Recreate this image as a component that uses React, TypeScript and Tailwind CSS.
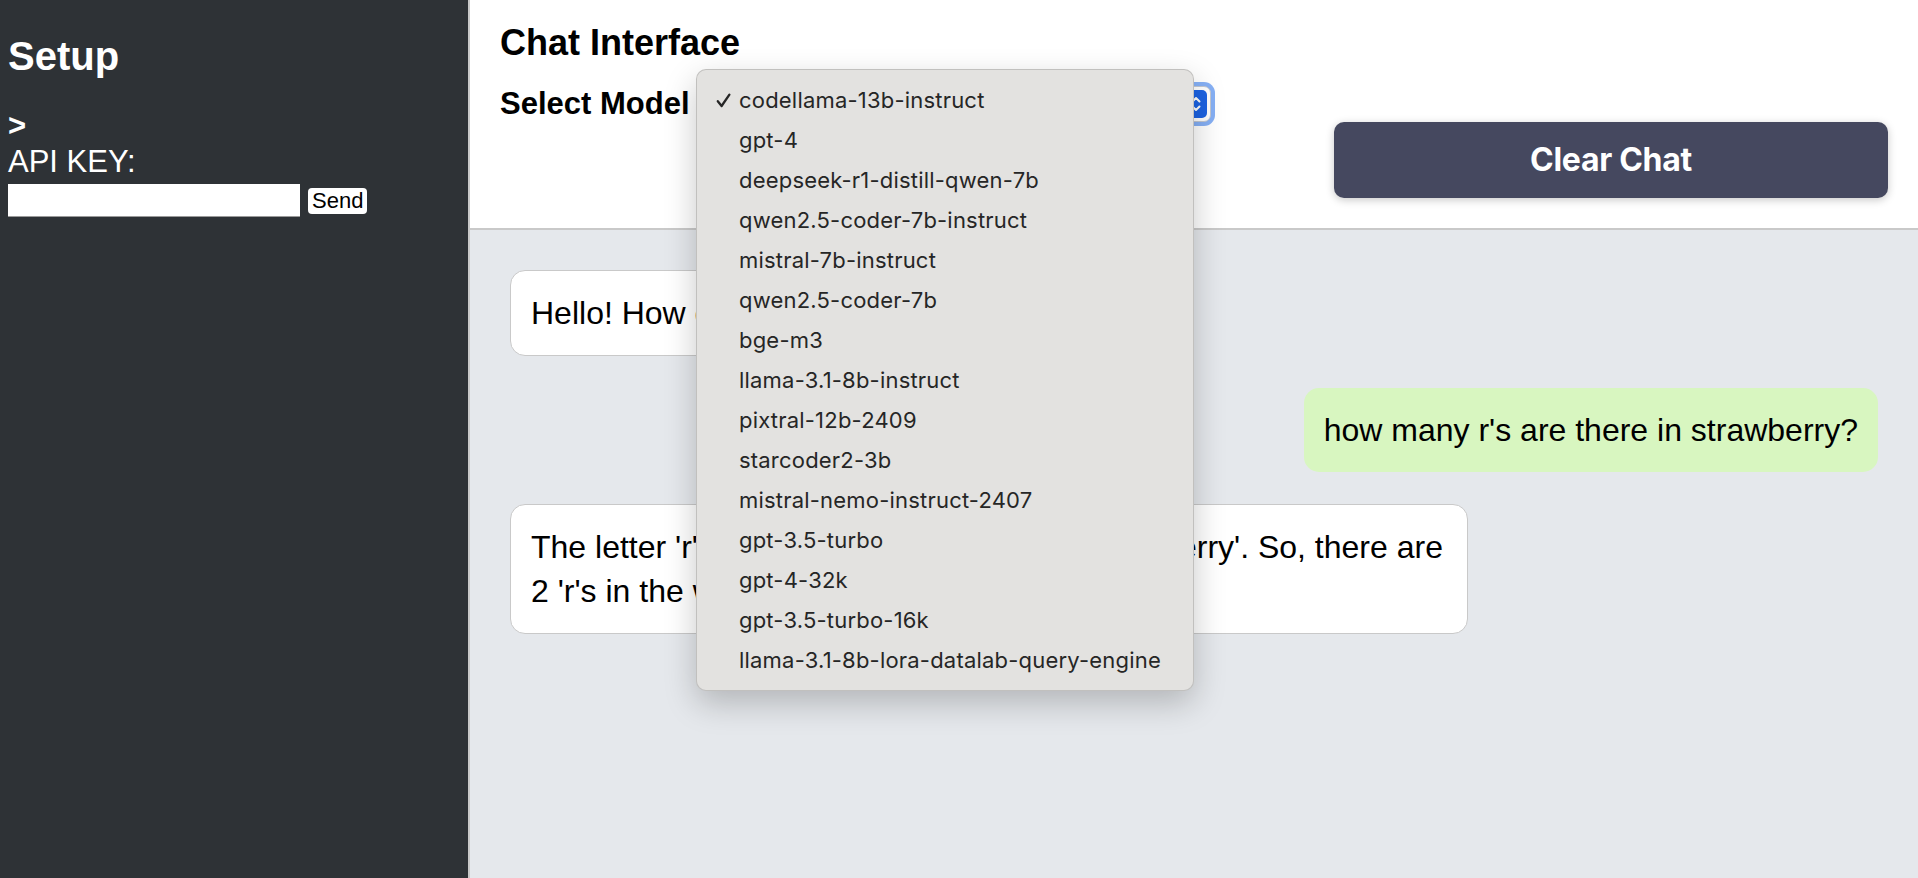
import React from 'react';

const models = [
  'codellama-13b-instruct',
  'gpt-4',
  'deepseek-r1-distill-qwen-7b',
  'qwen2.5-coder-7b-instruct',
  'mistral-7b-instruct',
  'qwen2.5-coder-7b',
  'bge-m3',
  'llama-3.1-8b-instruct',
  'pixtral-12b-2409',
  'starcoder2-3b',
  'mistral-nemo-instruct-2407',
  'gpt-3.5-turbo',
  'gpt-4-32k',
  'gpt-3.5-turbo-16k',
  'llama-3.1-8b-lora-datalab-query-engine',
];

const messages = [
  { role: 'assistant', text: 'Hello! How can I help you today?' },
  { role: 'user', text: "how many r's are there in strawberry?" },
  {
    role: 'assistant',
    text: "The letter 'r' appears twice in the word 'strawberry'. So, there are 2 'r's in the word.",
  },
];

const App: React.FC = () => {
  const selected = models[0];

  return (
    <div className="flex h-screen w-full overflow-hidden font-['Liberation_Sans',Arial,sans-serif] text-black">
      {/* Sidebar */}
      <aside className="w-[470px] shrink-0 bg-[#2e3236] border-r-2 border-[#c9c9c9] pl-2 text-white">
        <h1 className="mt-[33px] text-[40px] font-bold leading-[46px]">Setup</h1>
        <div className="mt-[29px] text-[31px] font-bold leading-[36px]">&gt;</div>
        <label className="block text-[31px] leading-[36px]">API KEY:</label>
        <div className="mt-[4px] flex items-center gap-2">
          <input
            type="password"
            className="w-[292px] h-[33px] bg-white border-b border-[#9a9a9a] text-black outline-none"
          />
          <button className="h-[26px] px-[4px] rounded-[4px] bg-white text-black text-[22px] leading-[26px]">
            Send
          </button>
        </div>
      </aside>

      {/* Main */}
      <main className="relative flex-1 min-w-0 flex flex-col">
        <header className="bg-white border-b-2 border-[#c9c9c9] px-[30px] pt-[22px] pb-[30px] flex flex-col">
          <h2 className="text-[36px] font-bold leading-[41px]">Chat Interface</h2>
          <div className="mt-[23px] h-[36px] flex items-center">
            <label className="text-[31px] font-bold leading-[36px]">Select Model</label>
            <div className="ml-[22px] w-[499px] h-[36px] rounded-[7px] bg-white border border-[#c3c8d2] shadow-[0_0_0_4px_#86b0f5] flex items-center justify-between pl-[26px] pr-[3px]">
              <span className="font-['Inter',sans-serif] text-[22px] text-[#222]">{selected}</span>
              <span className="w-[22px] h-[28px] rounded-[5px] bg-[#1c63e3] flex items-center justify-center">
                <svg width="12" height="18" viewBox="0 0 12 18" fill="none" stroke="white" strokeWidth="2" strokeLinecap="round" strokeLinejoin="round">
                  <path d="M2.5 6.5 L6 3 L9.5 6.5" />
                  <path d="M2.5 11.5 L6 15 L9.5 11.5" />
                </svg>
              </span>
            </div>
          </div>
          <button className="self-end w-[554px] h-[76px] rounded-[10px] bg-[#45485f] text-white font-['Inter',sans-serif] text-[32px] font-bold tracking-[-0.3px] shadow-[0_2px_8px_rgba(0,0,0,0.22)]">
            Clear Chat
          </button>
        </header>

        <section className="flex-1 bg-[#e5e8ec] px-[40px] pt-[40px] flex flex-col gap-[32px]">
          {messages.map((m, idx) =>
            m.role === 'user' ? (
              <div
                key={idx}
                className="self-end max-w-[70%] rounded-[15px] bg-[#d8f6c0] px-5 py-5 text-[32px] leading-[44px]"
              >
                {m.text}
              </div>
            ) : (
              <div
                key={idx}
                className="self-start max-w-[70%] rounded-[15px] bg-white border border-[#c9c9c9] px-5 py-5 text-[32px] leading-[44px]"
              >
                {m.text}
              </div>
            )
          )}
        </section>

        {/* open model menu */}
        <div className="absolute left-[226px] top-[69px] w-[498px] py-[10px] rounded-[10px] bg-[#e3e2e0] border border-black/15 shadow-[0_12px_32px_rgba(0,0,0,0.22)] font-['Inter',sans-serif] text-[22px] tracking-[0.2px] text-[#262626]">
          {models.map((m) => (
            <div key={m} className="h-[40px] flex items-center pl-[19px]">
              <span className="w-[23px] shrink-0 flex items-center">
                {m === selected && (
                  <svg width="15" height="15" viewBox="0 0 15 15" fill="none" stroke="#262626" strokeWidth="2.3" strokeLinecap="round" strokeLinejoin="round">
                    <path d="M1.8 8.2 L5.6 13 L13.4 1.6" />
                  </svg>
                )}
              </span>
              <span>{m}</span>
            </div>
          ))}
        </div>
      </main>
    </div>
  );
};

export default App;
